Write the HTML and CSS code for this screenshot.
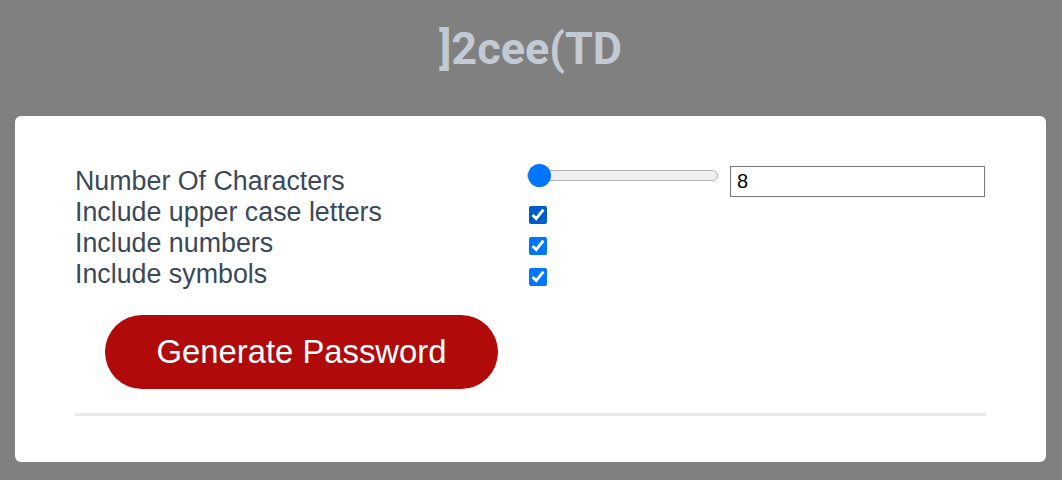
FILE: index.html
```html
<!DOCTYPE html>
<html>
<head>
<meta charset="utf-8">
<link rel="stylesheet" href="styles.css">
</head>
<body>
<header class="header">
  <h1 class="title">]2cee(TD</h1>
</header>
<main class="card">
  <div class="form">
    <label class="label" for="chars">Number Of Characters</label>
    <div class="control control-range">
      <input class="range" type="range" id="chars" min="8" max="50" value="8">
      <input class="number" type="text" value="8">
    </div>
    <label class="label" for="upper">Include upper case letters</label>
    <div class="control"><input class="check check-hover" type="checkbox" id="upper" checked></div>
    <label class="label" for="nums">Include numbers</label>
    <div class="control"><input class="check" type="checkbox" id="nums" checked></div>
    <label class="label" for="syms">Include symbols</label>
    <div class="control"><input class="check" type="checkbox" id="syms" checked></div>
  </div>
  <button class="generate" type="button">Generate Password</button>
  <hr class="divider">
</main>
</body>
</html>
```
FILE: styles.css
```css
html, body {
  margin: 0;
  padding: 0;
}
body {
  background: #808080;
  font-family: "Liberation Sans", Arial, sans-serif;
  padding: 0 16px 18px 15px;
}
.header {
  height: 116px;
  display: flex;
  align-items: center;
  justify-content: center;
}
.title {
  margin: 0;
  font-family: Roboto, "Liberation Sans", sans-serif;
  font-weight: 700;
  font-size: 45px;
  color: #c3cad3;
  padding-bottom: 20px;
}
.card {
  background: #fff;
  border-radius: 6px;
  padding: 45px 60px 46px 60px;
}
.form {
  display: grid;
  grid-template-columns: 450px 1fr;
  align-items: end;
}
.label {
  font-size: 26.8px;
  color: #3a4858;
  line-height: 31px;
}
.control {
  display: flex;
  align-items: center;
}
.control-range {
  align-items: flex-start;
  gap: 10px;
}
.range {
  -webkit-appearance: none;
  appearance: none;
  width: 191px;
  height: 24px;
  margin: 2px 0 0 2px;
  background: transparent;
}
.range::-webkit-slider-runnable-track {
  height: 11px;
  background: #efefef;
  border: 1px solid #b2b2b2;
  border-radius: 6px;
  box-sizing: border-box;
}
.range::-webkit-slider-thumb {
  -webkit-appearance: none;
  appearance: none;
  width: 23px;
  height: 23px;
  border-radius: 50%;
  background: #0075ff;
  border: none;
  margin-top: -7px;
}
.number {
  width: 255px;
  height: 31px;
  box-sizing: border-box;
  border: 1px solid #767676;
  border-radius: 0;
  margin: 5px 0 0 2px;
  padding: 0 6px;
  font-family: "Liberation Sans", Arial, sans-serif;
  font-size: 20px;
  color: #000;
}
.check {
  width: 18px;
  height: 18px;
  margin: 0 0 4px 4px;
  accent-color: #0075ff;
}
.check-hover {
  accent-color: #005cc8;
}
.generate {
  display: block;
  margin: 25px 0 0 30px;
  width: 393px;
  height: 74px;
  border: none;
  border-radius: 37px;
  background: #b00a0a;
  color: #fff;
  font-family: "Liberation Sans", Arial, sans-serif;
  font-size: 32.8px;
  padding: 0;
}
.divider {
  margin: 24px 0 0 0;
  border: none;
  height: 3px;
  background: #e8e9eb;
}
```
